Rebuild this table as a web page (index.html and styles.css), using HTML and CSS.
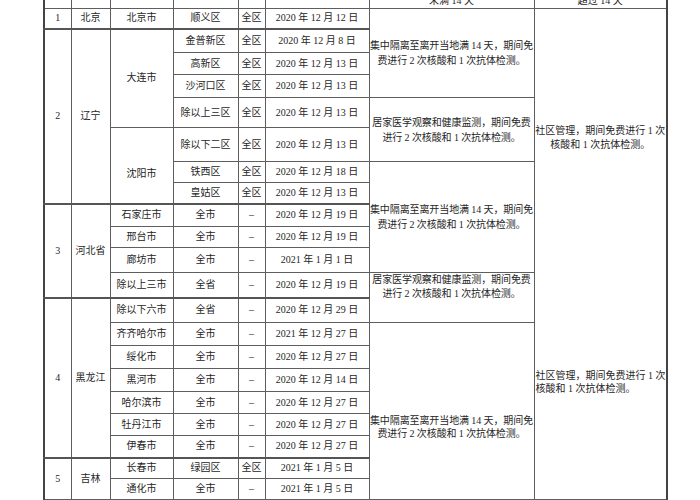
FILE: index.html
```html
<!DOCTYPE html>
<html lang="zh">
<head>
<meta charset="utf-8">
<title>表格</title>
<link rel="stylesheet" href="styles.css">
</head>
<body>
<div class="page">
<table class="grid">
<colgroup>
<col class="c1"><col class="c2"><col class="c3"><col class="c4"><col class="c5"><col class="c6"><col class="c7"><col class="c8">
</colgroup>
<tr class="head"><td></td><td></td><td></td><td></td><td></td><td></td><td class="hd">未满 14 天</td><td class="hd">超过 14 天</td></tr>
<tr class="h20"><td>1</td><td>北京</td><td>北京市</td><td>顺义区</td><td>全区</td><td>2020 年 12 月 12 日</td>
<td rowspan="4" class="note">集中隔离至离开当地满 14 天，期间免<br>费进行 2 次核酸和 1 次抗体检测。</td>
<td rowspan="15" class="comm1">社区管理，期间免费进行 1 次<br>核酸和 1 次抗体检测。</td></tr>
<tr class="h24 grp"><td rowspan="7">2</td><td rowspan="7">辽宁</td><td rowspan="4">大连市</td><td>金普新区</td><td>全区</td><td>2020 年 12 月 8 日</td></tr>
<tr class="h22"><td>高新区</td><td>全区</td><td>2020 年 12 月 13 日</td></tr>
<tr class="h23"><td>沙河口区</td><td>全区</td><td>2020 年 12 月 13 日</td></tr>
<tr class="h30"><td>除以上三区</td><td>全区</td><td>2020 年 12 月 13 日</td>
<td rowspan="2" class="note">居家医学观察和健康监测，期间免费<br>进行 2 次核酸和 1 次抗体检测。</td></tr>
<tr class="h34"><td rowspan="3" class="low">沈阳市</td><td>除以下二区</td><td>全区</td><td>2020 年 12 月 13 日</td></tr>
<tr class="h21"><td>铁西区</td><td>全区</td><td>2020 年 12 月 18 日</td>
<td rowspan="5" class="note">集中隔离至离开当地满 14 天，期间免<br>费进行 2 次核酸和 1 次抗体检测。</td></tr>
<tr class="h21"><td>皇姑区</td><td>全区</td><td>2020 年 12 月 13 日</td></tr>
<tr class="h23 grp"><td rowspan="4">3</td><td rowspan="4">河北省</td><td>石家庄市</td><td>全市</td><td>–</td><td>2020 年 12 月 19 日</td></tr>
<tr class="h21"><td>邢台市</td><td>全市</td><td>–</td><td>2020 年 12 月 19 日</td></tr>
<tr class="h25"><td>廊坊市</td><td>全市</td><td>–</td><td>2021 年 1 月 1 日</td></tr>
<tr class="h25"><td>除以上三市</td><td>全省</td><td>–</td><td>2020 年 12 月 19 日</td>
<td rowspan="2" class="note top">居家医学观察和健康监测，期间免费<br>进行 2 次核酸和 1 次抗体检测。</td></tr>
<tr class="h25 grp"><td rowspan="7">4</td><td rowspan="7">黑龙江</td><td>除以下六市</td><td>全省</td><td>–</td><td>2020 年 12 月 29 日</td></tr>
<tr class="h23"><td>齐齐哈尔市</td><td>全市</td><td>–</td><td>2021 年 12 月 27 日</td>
<td rowspan="8" class="note late">集中隔离至离开当地满 14 天，期间免<br>费进行 2 次核酸和 1 次抗体检测。</td></tr>
<tr class="h23"><td>绥化市</td><td>全市</td><td>–</td><td>2020 年 12 月 27 日</td></tr>
<tr class="h23"><td>黑河市</td><td>全市</td><td>–</td><td>2020 年 12 月 14 日</td>
<td rowspan="6" class="comm2">社区管理，期间免费进行 1 次<br>核酸和 1 次抗体检测。</td></tr>
<tr class="h22"><td>哈尔滨市</td><td>全市</td><td>–</td><td>2020 年 12 月 27 日</td></tr>
<tr class="h22"><td>牡丹江市</td><td>全市</td><td>–</td><td>2020 年 12 月 27 日</td></tr>
<tr class="h22"><td>伊春市</td><td>全市</td><td>–</td><td>2020 年 12 月 27 日</td></tr>
<tr class="h21 grp"><td rowspan="2">5</td><td rowspan="2">吉林</td><td>长春市</td><td>绿园区</td><td>全区</td><td>2021 年 1 月 5 日</td></tr>
<tr class="h21"><td>通化市</td><td>全市</td><td>–</td><td>2021 年 1 月 5 日</td></tr>
</table>
</div>
</body>
</html>
```
FILE: styles.css
```css
html, body {
  margin: 0;
  padding: 0;
  background: #ffffff;
  overflow: hidden;
}
.page {
  padding-left: 43px;
}
.grid {
  border-collapse: collapse;
  table-layout: fixed;
  width: 623px;
  margin-top: -12px;
  font-family: "Liberation Serif", "Noto Sans CJK SC", serif;
  font-size: 10px;
  color: #262626;
  border-left: 2px solid #444;
  border-right: 2px solid #444;
}
.c1 { width: 27px; }
.c2 { width: 39px; }
.c3 { width: 63px; }
.c4 { width: 65px; }
.c5 { width: 27px; }
.c6 { width: 104px; }
.c7 { width: 165px; }
.c8 { width: 133px; }
.grid td {
  border: 1px solid #5e5e5e;
  padding: 0;
  text-align: center;
  vertical-align: middle;
  line-height: 12px;
  white-space: nowrap;
  overflow: hidden;
}
.grid tr.grp > td {
  border-top: 2px solid #555;
}
.head { height: 20px; }
.grid .hd {
  vertical-align: bottom;
  padding-bottom: 1px;
}
.h20 { height: 20px; }
.h21 { height: 21px; }
.h22 { height: 22px; }
.h23 { height: 23px; }
.h24 { height: 24px; }
.h25 { height: 25px; }
.h30 { height: 30px; }
.h34 { height: 34px; }
.grid .note {
  line-height: 15px;
  letter-spacing: -0.1px;
}
.grid .note.top {
  vertical-align: top;
  line-height: 14px;
}
.grid .note.late {
  vertical-align: top;
  padding-top: 91px;
  line-height: 13px;
}
.grid .low {
  padding-top: 18px;
}
.grid .comm1 {
  vertical-align: top;
  padding-top: 115px;
  line-height: 14px;
  border-bottom: none;
}
.grid .comm2 {
  vertical-align: top;
  text-align: left;
  padding-left: 1px;
  line-height: 13px;
  border-top: none;
}
```
